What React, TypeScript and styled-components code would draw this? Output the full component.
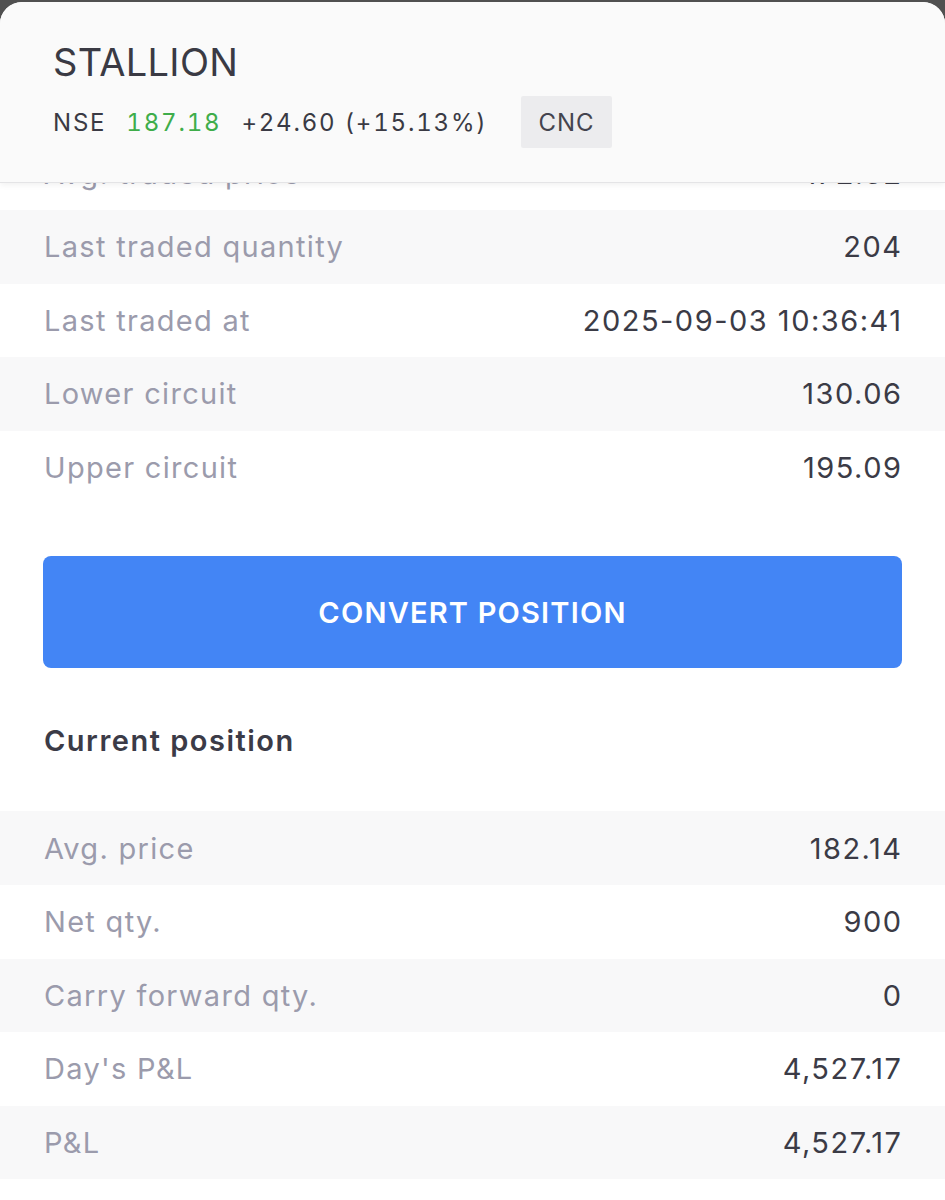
import React from "react";
import styled, { createGlobalStyle } from "styled-components";

const Global = createGlobalStyle`
  html, body { margin: 0; padding: 0; background: #ffffff; }
  body { font-family: Inter, "Noto Sans", sans-serif; -webkit-font-smoothing: antialiased; }
`;

const Backdrop = styled.div`
  background: #505050;
  padding-top: 2px;
  width: 945px;
  height: 1200px;
  overflow: hidden;
`;

const Sheet = styled.div`
  background: #ffffff;
  border-radius: 22px 22px 0 0;
  height: 1198px;
  overflow: hidden;
`;

const Header = styled.header`
  position: relative;
  z-index: 2;
  background: #fafafa;
  height: 180px;
  box-sizing: border-box;
  padding: 36px 53px 0;
  box-shadow: 0 1px 0 #e4e4e6, 0 3px 6px rgba(0, 0, 0, 0.06);
`;

const Symbol = styled.h1`
  margin: 0;
  font-size: 38px;
  font-weight: 400;
  line-height: 48px;
  color: #3a3a44;
  letter-spacing: 0.3px;
`;

const Quote = styled.div`
  display: flex;
  align-items: center;
  gap: 20px;
  margin-top: 10px;
  font-size: 24px;
  color: #3a3a44;
  letter-spacing: 1.8px;
  font-variant-numeric: tabular-nums;
`;

const Price = styled.span<{ $tone?: "up" | "plain" }>`
  color: ${(p) => (p.$tone === "up" ? "#3fad4a" : "#3a3a44")};
`;

const Badge = styled.span`
  margin-left: 14px;
  background: #ececee;
  color: #44444e;
  height: 52px;
  padding: 0 17px;
  display: inline-flex;
  align-items: center;
  border-radius: 2px;
  letter-spacing: 1px;
`;

const Peek = styled.div`
  height: 28px;
  overflow: hidden;
  display: flex;
  flex-direction: column;
  justify-content: flex-end;
`;

const Row = styled.div<{ $shade: boolean }>`
  flex: none;
  height: 73.6px;
  display: flex;
  align-items: center;
  justify-content: space-between;
  padding: 0 44px;
  background: ${(p) => (p.$shade ? "#f8f8f9" : "#ffffff")};
  font-size: 29px;
`;

const Label = styled.span`
  color: #9b9bac;
  letter-spacing: 1.3px;
`;

const Value = styled.span`
  color: #3b3b46;
  letter-spacing: 1.5px;
  margin-right: -1.5px;
`;

const ButtonWrap = styled.div`
  padding: 52px 43px 0;
`;

const Button = styled.button`
  width: 100%;
  height: 112px;
  border: none;
  border-radius: 8px;
  background: #4385f5;
  color: #ffffff;
  font-family: Inter, "Noto Sans", sans-serif;
  font-size: 29px;
  font-weight: 600;
  letter-spacing: 1.2px;
`;

const SectionTitle = styled.h2`
  margin: 0;
  padding: 54px 44px 52px;
  font-size: 29px;
  line-height: 37px;
  font-weight: 600;
  color: #3b3b47;
  letter-spacing: 1.5px;
`;

const marketRows = [
  { label: "Last traded quantity", value: "204" },
  { label: "Last traded at", value: "2025-09-03 10:36:41" },
  { label: "Lower circuit", value: "130.06" },
  { label: "Upper circuit", value: "195.09" },
];

const positionRows = [
  { label: "Avg. price", value: "182.14" },
  { label: "Net qty.", value: "900" },
  { label: "Carry forward qty.", value: "0" },
  { label: "Day's P&L", value: "4,527.17" },
  { label: "P&L", value: "4,527.17" },
];

export default function App() {
  return (
    <>
      <Global />
      <Backdrop>
        <Sheet>
          <Header>
            <Symbol>STALLION</Symbol>
            <Quote>
              <Price>NSE</Price>
              <Price $tone="up">187.18</Price>
              <Price>+24.60 (+15.13%)</Price>
              <Badge>CNC</Badge>
            </Quote>
          </Header>
          <Peek>
            <Row $shade={false}>
              <Label>Avg. traded price</Label>
              <Value>172.32</Value>
            </Row>
          </Peek>
          {marketRows.map((r, i) => (
            <Row key={r.label} $shade={i % 2 === 0}>
              <Label>{r.label}</Label>
              <Value>{r.value}</Value>
            </Row>
          ))}
          <ButtonWrap>
            <Button>CONVERT POSITION</Button>
          </ButtonWrap>
          <SectionTitle>Current position</SectionTitle>
          {positionRows.map((r, i) => (
            <Row key={r.label} $shade={i % 2 === 0}>
              <Label>{r.label}</Label>
              <Value>{r.value}</Value>
            </Row>
          ))}
        </Sheet>
      </Backdrop>
    </>
  );
}
